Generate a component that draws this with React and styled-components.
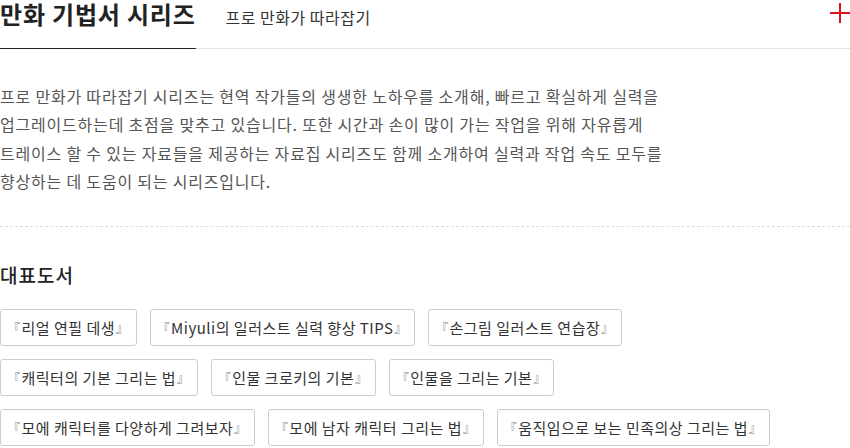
import React from 'react';
import styled, { createGlobalStyle } from 'styled-components';

const GlobalStyle = createGlobalStyle`
  html, body {
    margin: 0;
    padding: 0;
    background: #fff;
  }
  body {
    font-family: "Noto Sans CJK KR", "Noto Sans", sans-serif;
    color: #222;
  }
`;

const books = [
    ['리얼 연필 데생', 'Miyuli의 일러스트 실력 향상 TIPS', '손그림 일러스트 연습장'],
    ['캐릭터의 기본 그리는 법', '인물 크로키의 기본', '인물을 그리는 기본'],
    ['모에 캐릭터를 다양하게 그려보자', '모에 남자 캐릭터 그리는 법', '움직임으로 보는 민족의상 그리는 법'],
];

const App = () => {
    return (
        <Wrap>
            <GlobalStyle />
            <Header>
                <Title>만화 기법서 시리즈</Title>
                <SubTitle>프로 만화가 따라잡기</SubTitle>
                <PlusButton aria-label="더보기">
                    <svg width="20" height="20" viewBox="0 0 20 20">
                        <path d="M0 10H20M10 0V20" stroke="#d7141d" strokeWidth="2" fill="none" />
                    </svg>
                </PlusButton>
            </Header>

            <Intro>
                프로 만화가 따라잡기 시리즈는 현역 작가들의 생생한 노하우를 소개해, 빠르고 확실하게 실력을<br />
                업그레이드하는데 초점을 맞추고 있습니다. 또한 시간과 손이 많이 가는 작업을 위해 자유롭게<br />
                트레이스 할 수 있는 자료들을 제공하는 자료집 시리즈도 함께 소개하여 실력과 작업 속도 모두를<br />
                향상하는 데 도움이 되는 시리즈입니다.
            </Intro>

            <Books>
                <BooksTitle>대표도서</BooksTitle>
                <TagList>
                    {books.map((row, i) => (
                        <TagRow key={i}>
                            {row.map((name) => (
                                <Tag key={name}>
                                    <Bracket>『</Bracket>{name}<Bracket $close>』</Bracket>
                                </Tag>
                            ))}
                        </TagRow>
                    ))}
                </TagList>
            </Books>
        </Wrap>
    );
};

export default App;

const Wrap = styled.div`
    width: 850px;
`;

const Header = styled.div`
    display: flex;
    align-items: flex-start;
    height: 48px;
    border-bottom: 1px solid #e3e3e3;
`;

const Title = styled.h2`
    margin: 0 0 -1px;
    height: 48px;
    flex-shrink: 0;
    border-bottom: 1px solid #222;
    font-size: 24px;
    font-weight: 700;
    line-height: 28px;
    color: #222;
    letter-spacing: 0.8px;
    white-space: nowrap;
`;

const SubTitle = styled.span`
    margin: 3px 0 0 30px;
    font-size: 16px;
    line-height: 28px;
    color: #333;
    letter-spacing: 0.5px;
    white-space: nowrap;
`;

const PlusButton = styled.button`
    margin-left: auto;
    margin-top: 3px;
    padding: 0;
    border: 0;
    background: none;
    width: 20px;
    height: 20px;
    display: flex;
    cursor: pointer;
`;

const Intro = styled.p`
    margin: 0;
    padding: 33px 0 31px;
    border-bottom: 1px dashed #ddd;
    font-size: 16px;
    line-height: 28.3px;
    color: #555;
    letter-spacing: 0.8px;
    white-space: nowrap;
`;

const Books = styled.div`
    padding-top: 35px;
`;

const BooksTitle = styled.h3`
    margin: 0 0 21px;
    font-size: 19px;
    font-weight: 500;
    line-height: 26px;
    color: #222;
    letter-spacing: 1px;
`;

const TagList = styled.div`
    display: flex;
    flex-direction: column;
    gap: 13px;
`;

const TagRow = styled.div`
    display: flex;
    gap: 13px;
`;

const Tag = styled.a`
    display: inline-flex;
    align-items: center;
    height: 37px;
    box-sizing: border-box;
    padding: 0 12px;
    border: 1px solid #ccc;
    border-radius: 3px;
    font-size: 15px;
    color: #333;
    letter-spacing: 0.5px;
    white-space: nowrap;
    cursor: pointer;
`;

const Bracket = styled.span`
    font-size: 12px;
    color: #888;
    margin: ${p => (p.$close ? '0 -5px 0 1px' : '0 1px 0 -5px')};
`;
